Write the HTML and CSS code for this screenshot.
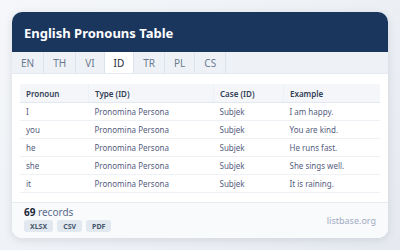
FILE: index.html
```html
<!DOCTYPE html>
<html lang="en">
<head>
    <meta charset="UTF-8">
    <meta name="viewport" content="width=device-width, initial-scale=1.0">
    <title>English Pronouns Table</title>
    <link rel="stylesheet" href="styles.css">
</head>
<body>
    <div class="card">
        <div class="card-header">
            <h1>English Pronouns Table</h1>
        </div>

        <div class="tabs">
            <span class="tab">EN</span>
            <span class="tab">TH</span>
            <span class="tab">VI</span>
            <span class="tab active">ID</span>
            <span class="tab">TR</span>
            <span class="tab">PL</span>
            <span class="tab">CS</span>
        </div>

        <div class="table-wrap">
            <table>
                <thead>
                    <tr>
                        <th class="col-pronoun">Pronoun</th>
                        <th class="col-type">Type (ID)</th>
                        <th class="col-case">Case (ID)</th>
                        <th>Example</th>
                    </tr>
                </thead>
                <tbody>
                    <tr><td>I</td><td>Pronomina Persona</td><td>Subjek</td><td>I am happy.</td></tr>
                    <tr><td>you</td><td>Pronomina Persona</td><td>Subjek</td><td>You are kind.</td></tr>
                    <tr><td>he</td><td>Pronomina Persona</td><td>Subjek</td><td>He runs fast.</td></tr>
                    <tr><td>she</td><td>Pronomina Persona</td><td>Subjek</td><td>She sings well.</td></tr>
                    <tr><td>it</td><td>Pronomina Persona</td><td>Subjek</td><td>It is raining.</td></tr>
                </tbody>
            </table>
        </div>

        <div class="card-footer">
            <div class="footer-left">
                <div class="count"><strong>69</strong> records</div>
                <div class="downloads">
                    <span class="btn">XLSX</span>
                    <span class="btn">CSV</span>
                    <span class="btn">PDF</span>
                </div>
            </div>
            <div class="brand">listbase.org</div>
        </div>
    </div>
</body>
</html>
```

FILE: styles.css
```css
html, body {
    margin: 0;
    height: 100%;
}
body {
    font-family: "Noto Sans", Arial, sans-serif;
    background: linear-gradient(135deg, #f5f7fa 0%, #e6eaf0 100%);
    padding: 12px;
    box-sizing: border-box;
}
.card {
    background-color: white;
    border-radius: 10px;
    box-shadow: 0 2px 8px rgba(30, 41, 59, 0.12);
    overflow: hidden;
    height: 226px;
    display: flex;
    flex-direction: column;
}
.card-header {
    background-color: #1b365d;
    height: 40px;
    display: flex;
    align-items: center;
    padding: 0 12px;
}
h1 {
    margin: 0;
    color: white;
    font-size: 13px;
    font-weight: 700;
    padding-top: 1px;
}
.tabs {
    display: flex;
    background-color: #eef2f7;
    height: 21px;
    border-bottom: 1px solid #e5e9f0;
}
.tab {
    display: flex;
    align-items: center;
    padding: 0 9px;
    font-size: 10px;
    color: #6b7a90;
    border-right: 1px solid #dde3ec;
}
.tab.active {
    background-color: white;
    color: #1e293b;
}
.table-wrap {
    padding: 10px 8px 8px;
    flex: 1;
}
table {
    width: 100%;
    border-collapse: collapse;
    font-size: 8px;
}
th {
    text-align: left;
    font-weight: 600;
    color: #334155;
    background-color: #f4f6fa;
    height: 18px;
    padding: 0 6px;
    border-bottom: 1px solid #e2e8f0;
    border-right: 1px solid #edf0f5;
}
th:last-child {
    border-right: none;
}
td {
    color: #555d7e;
    height: 17px;
    padding: 0 6px;
    border-bottom: 1px solid #eef1f5;
}
.col-pronoun {
    width: 56px;
}
.col-type {
    width: 112px;
}
.col-case {
    width: 57px;
}
.card-footer {
    background-color: #f8fafc;
    border-top: 1px solid #e8ecf2;
    height: 36px;
    display: flex;
    justify-content: space-between;
    align-items: flex-end;
    padding: 0 12px 6px;
    box-sizing: border-box;
}
.count {
    font-size: 10px;
    color: #5a6b8c;
    line-height: 12px;
    margin-bottom: 2px;
}
.count strong {
    color: #1e293b;
    font-weight: 700;
}
.downloads {
    display: flex;
    gap: 4px;
}
.btn {
    background-color: #e2e8f0;
    color: #475569;
    font-size: 7px;
    font-weight: 700;
    border-radius: 3px;
    padding: 0 6px;
    height: 12px;
    display: flex;
    align-items: center;
}
.brand {
    font-size: 9px;
    color: #a3abc2;
    margin-bottom: 5px;
}
```
